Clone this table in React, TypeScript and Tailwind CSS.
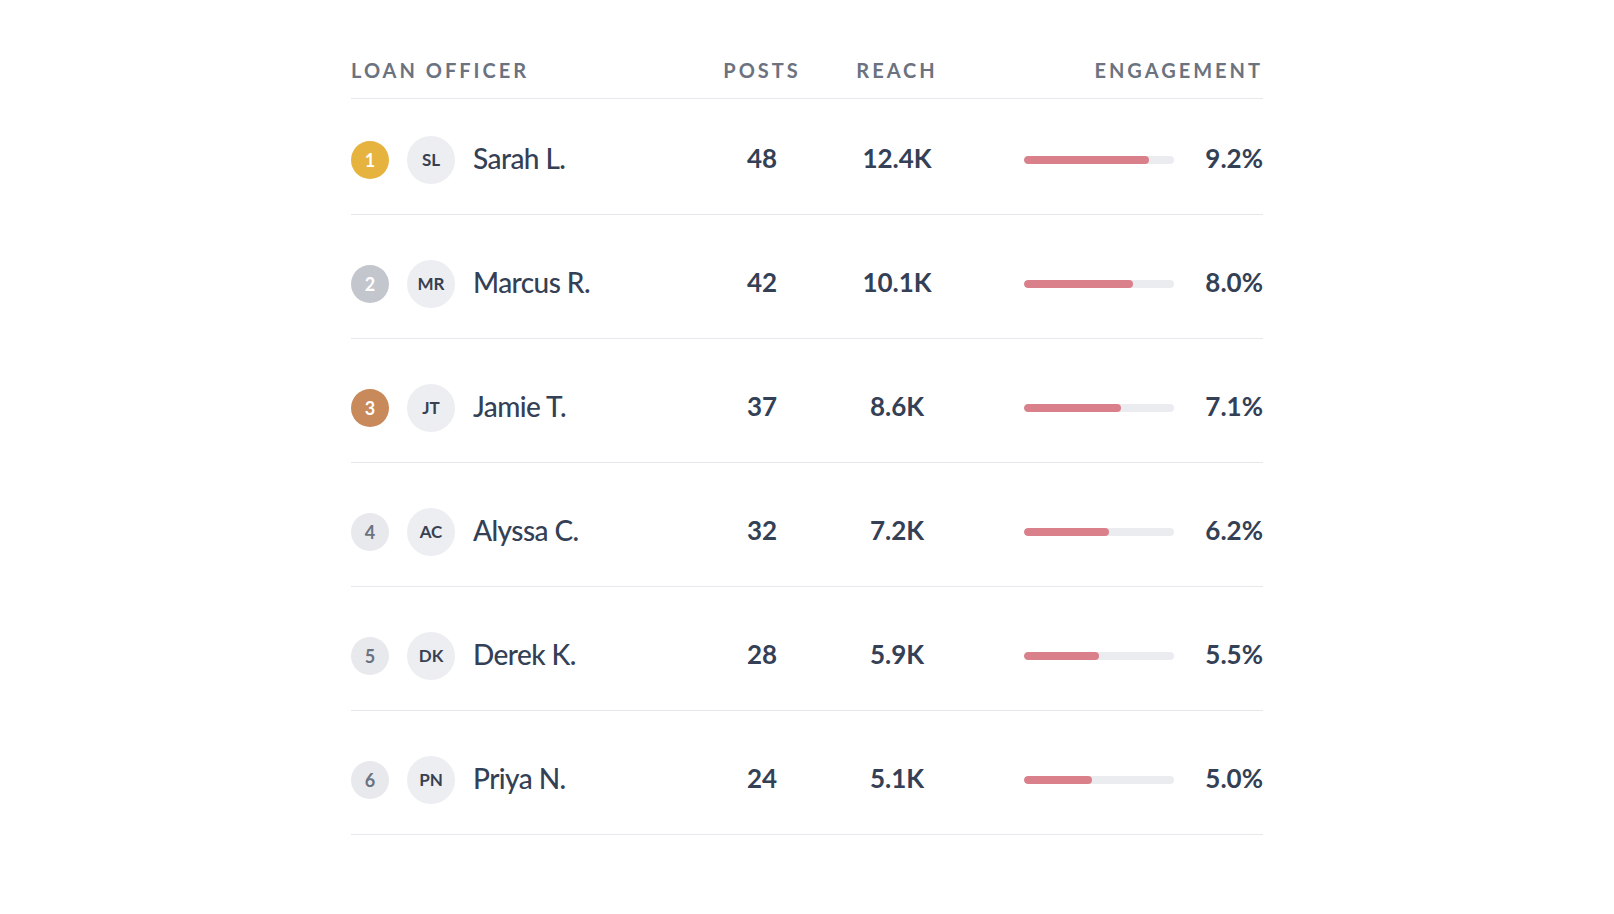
const rows = [
  { rank: 1, initials: "SL", name: "Sarah L.", posts: 48, reach: "12.4K", eng: 9.2 },
  { rank: 2, initials: "MR", name: "Marcus R.", posts: 42, reach: "10.1K", eng: 8.0 },
  { rank: 3, initials: "JT", name: "Jamie T.", posts: 37, reach: "8.6K", eng: 7.1 },
  { rank: 4, initials: "AC", name: "Alyssa C.", posts: 32, reach: "7.2K", eng: 6.2 },
  { rank: 5, initials: "DK", name: "Derek K.", posts: 28, reach: "5.9K", eng: 5.5 },
  { rank: 6, initials: "PN", name: "Priya N.", posts: 24, reach: "5.1K", eng: 5.0 },
]

const RANK_STYLE: Record<number, string> = {
  1: "bg-[#e6b33e] text-white",
  2: "bg-[#c3c6cd] text-white",
  3: "bg-[#c8895b] text-white",
}

const rankStyle = (r: number) => RANK_STYLE[r] || "bg-[#e8e9ed] text-[#6b7280]"

// bar scale: 11% engagement = full track
const MAX_ENG = 11

export default function App() {
  return (
    <div className="min-h-screen bg-white font-['Lato','Liberation_Sans',sans-serif] text-[#344055]">
      <div className="mx-auto w-[912px] pt-[56px]">
        {/* Header */}
        <div className="grid grid-cols-[346px_130px_140px_296px] items-center border-b border-[#e5e7eb] pb-[14px] text-[20px] leading-[28px] font-bold uppercase tracking-[0.15em] text-[#6b7280]">
          <div>Loan Officer</div>
          <div className="text-center">Posts</div>
          <div className="text-center">Reach</div>
          <div className="text-right">Engagement</div>
        </div>

        {/* Rows */}
        {rows.map((r, i) => (
          <div
            key={r.rank}
            className={`grid grid-cols-[346px_130px_140px_296px] items-center border-b border-[#e5e7eb] pb-[30px] ${
              i === 0 ? "pt-[37px]" : "pt-[45px]"
            }`}
          >
            <div className="flex items-center">
              <span className={`mr-[18px] flex h-[38px] w-[38px] items-center justify-center rounded-full text-[18px] font-bold ${rankStyle(r.rank)}`}>
                {r.rank}
              </span>
              <span className="mr-[18px] flex h-[48px] w-[48px] items-center justify-center rounded-full bg-[#eceef2] text-[17px] font-bold text-[#374151]">
                {r.initials}
              </span>
              <span className="-translate-y-[2px] text-[28px] font-medium leading-none tracking-[-0.02em]">{r.name}</span>
            </div>
            <div className="-translate-y-[2px] text-center text-[26px] font-bold leading-none">{r.posts}</div>
            <div className="-translate-y-[2px] text-center text-[26px] font-bold leading-none">{r.reach}</div>
            <div className="flex items-center justify-end">
              <div className="h-2 w-[150px] overflow-hidden rounded-full bg-[#ebecf0]">
                <div className="h-full rounded-full bg-[#d9808a]" style={{ width: `${(r.eng / MAX_ENG) * 100}%` }} />
              </div>
              <div className="w-[89px] -translate-y-[2px] text-right text-[26px] font-bold leading-none">{r.eng.toFixed(1)}%</div>
            </div>
          </div>
        ))}
      </div>
    </div>
  )
}
